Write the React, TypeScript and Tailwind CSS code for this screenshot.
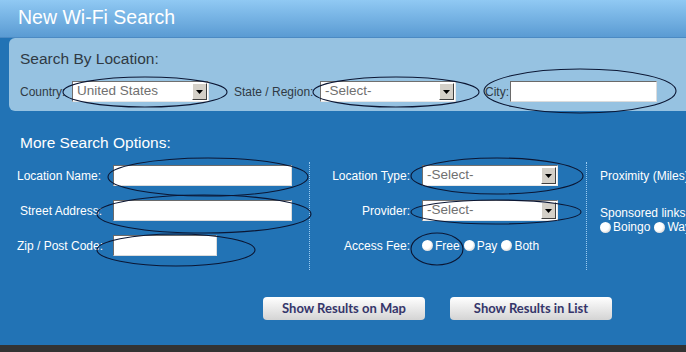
import type { ReactNode } from 'react';

const font = { fontFamily: '"Liberation Sans", Arial, sans-serif' };

function Select({ value, width }: { value: string; width: string }) {
  return (
    <div
      className={`flex h-[21px] shrink-0 items-stretch bg-white border border-t-[#707070] border-l-[#707070] border-b-[#e8e8e8] border-r-[#e8e8e8] ${width}`}
    >
      <div className="flex flex-1 items-center whitespace-nowrap pl-[4px] text-[13.5px] text-[#707070]">{value}</div>
      <div className="m-[1px] flex w-[15px] items-center justify-center border border-t-white border-l-white border-b-[#404040] border-r-[#404040] bg-[#d4d0c8]">
        <svg width="7" height="4" viewBox="0 0 7 4">
          <path d="M0 0h7L3.5 4z" fill="#000" />
        </svg>
      </div>
    </div>
  );
}

function TextBox({ width }: { width: string }) {
  return (
    <div
      className={`h-[21px] shrink-0 bg-white border border-t-[#6a6a6a] border-l-[#6a6a6a] border-b-[#dcdcdc] border-r-[#dcdcdc] ${width}`}
    />
  );
}

function Radio({ label }: { label: string }) {
  return (
    <span className="flex shrink-0 items-center gap-[2px] whitespace-nowrap">
      <span className="h-[11px] w-[11px] rounded-full bg-[radial-gradient(circle_at_40%_40%,#ffffff_45%,#b8b8b8_100%)]" />
      <span>{label}</span>
    </span>
  );
}

function Row({ children, className = '' }: { children: ReactNode; className?: string }) {
  return <div className={`flex h-[35px] items-center whitespace-nowrap ${className}`}>{children}</div>;
}

export default function App() {
  return (
    <div className="relative h-[352px] w-[686px] overflow-hidden bg-[#2273b5]" style={font}>
      {/* title */}
      <div className="h-[38px] border-b border-[#4b8ac3] bg-gradient-to-b from-[#90c9f3] to-[#5a9bd3] pl-[18px] pt-[5px] text-[19.5px] leading-[24px] text-white">
        New Wi-Fi Search
      </div>

      {/* search by location */}
      <div className="ml-[9px] h-[73px] rounded-l-[6px] bg-[#96c2e1] pl-[11px] pt-[11px] text-[#303a44]">
        <div className="text-[15.5px] leading-[20px]">Search By Location:</div>
        <div className="mt-[12px] flex items-center whitespace-nowrap text-[12px]">
          <span className="w-[52px] shrink-0">Country:</span>
          <Select value="United States" width="w-[137px]" />
          <span className="ml-[25px] w-[86px] shrink-0">State / Region:</span>
          <Select value="-Select-" width="w-[136px]" />
          <span className="ml-[29px] w-[25px] shrink-0">City:</span>
          <TextBox width="w-[147px]" />
        </div>
      </div>

      {/* more options */}
      <div className="pl-[20px] pt-[23px] text-[15.5px] leading-[18px] text-white">More Search Options:</div>
      <div className="mt-[4px] flex text-[12px] text-white">
        <div className="w-[309px] shrink-0 pt-[2px]">
          <Row>
            <span className="w-[113px] shrink-0 pl-[17px]">Location Name:</span>
            <TextBox width="w-[179px]" />
          </Row>
          <Row>
            <span className="w-[113px] shrink-0 pl-[20px]">Street Address:</span>
            <TextBox width="w-[179px]" />
          </Row>
          <Row>
            <span className="w-[113px] shrink-0 pl-[17px]">Zip / Post Code:</span>
            <TextBox width="w-[104px]" />
          </Row>
        </div>
        <div className="mt-[6px] h-[108px] w-[277px] shrink-0 border-l border-dotted border-[#9ccbf0]">
          <Row className="-mt-[4px]">
            <span className="w-[100px] shrink-0 text-right">Location Type:</span>
            <span className="w-[12px] shrink-0" />
            <Select value="-Select-" width="w-[136px]" />
          </Row>
          <Row>
            <span className="w-[100px] shrink-0 text-right">Provider:</span>
            <span className="w-[12px] shrink-0" />
            <Select value="-Select-" width="w-[136px]" />
          </Row>
          <Row>
            <span className="w-[100px] shrink-0 text-right">Access Fee:</span>
            <span className="w-[12px] shrink-0" />
            <div className="flex gap-[4px]">
              <Radio label="Free" />
              <Radio label="Pay" />
              <Radio label="Both" />
            </div>
          </Row>
        </div>
        <div className="mt-[6px] h-[108px] flex-1 border-l border-dotted border-[#9ccbf0] pl-[13px]">
          <Row className="-mt-[4px]">Proximity (Miles)</Row>
          <div className="mt-[13px] whitespace-nowrap leading-[14px]">
            <div>Sponsored links</div>
            <div className="flex gap-[4px]">
              <Radio label="Boingo" />
              <Radio label="Wayport" />
            </div>
          </div>
        </div>
      </div>

      {/* buttons */}
      <div className="mt-[27px] flex gap-[25px] pl-[263px]" style={{ fontFamily: 'Lato, "Open Sans", sans-serif' }}>
        <button className="h-[23px] w-[162px] rounded-[4px] bg-gradient-to-b from-white to-[#d4d4d4] text-[13px] font-bold text-[#35356a]">
          Show Results on Map
        </button>
        <button className="h-[23px] w-[162px] rounded-[4px] bg-gradient-to-b from-white to-[#d4d4d4] text-[13px] font-bold text-[#35356a]">
          Show Results in List
        </button>
      </div>

      {/* bottom strip */}
      <div className="absolute bottom-0 left-0 h-[7px] w-full bg-[#333]" />

      {/* hand-drawn ellipses */}
      <svg className="pointer-events-none absolute left-0 top-0" width="686" height="352" fill="none" stroke="#0b1633" strokeWidth="1.1">
        <ellipse cx="145" cy="92" rx="82" ry="15" />
        <ellipse cx="396" cy="92" rx="83" ry="15" />
        <ellipse cx="580" cy="91" rx="96" ry="22" />
        <ellipse cx="208" cy="177" rx="100" ry="19" />
        <ellipse cx="204" cy="214" rx="107" ry="19" />
        <ellipse cx="176" cy="250" rx="79" ry="16" />
        <ellipse cx="497" cy="176" rx="86" ry="18" />
        <ellipse cx="496" cy="212" rx="85" ry="12" />
        <ellipse cx="437" cy="249" rx="26" ry="16" />
      </svg>
    </div>
  );
}
